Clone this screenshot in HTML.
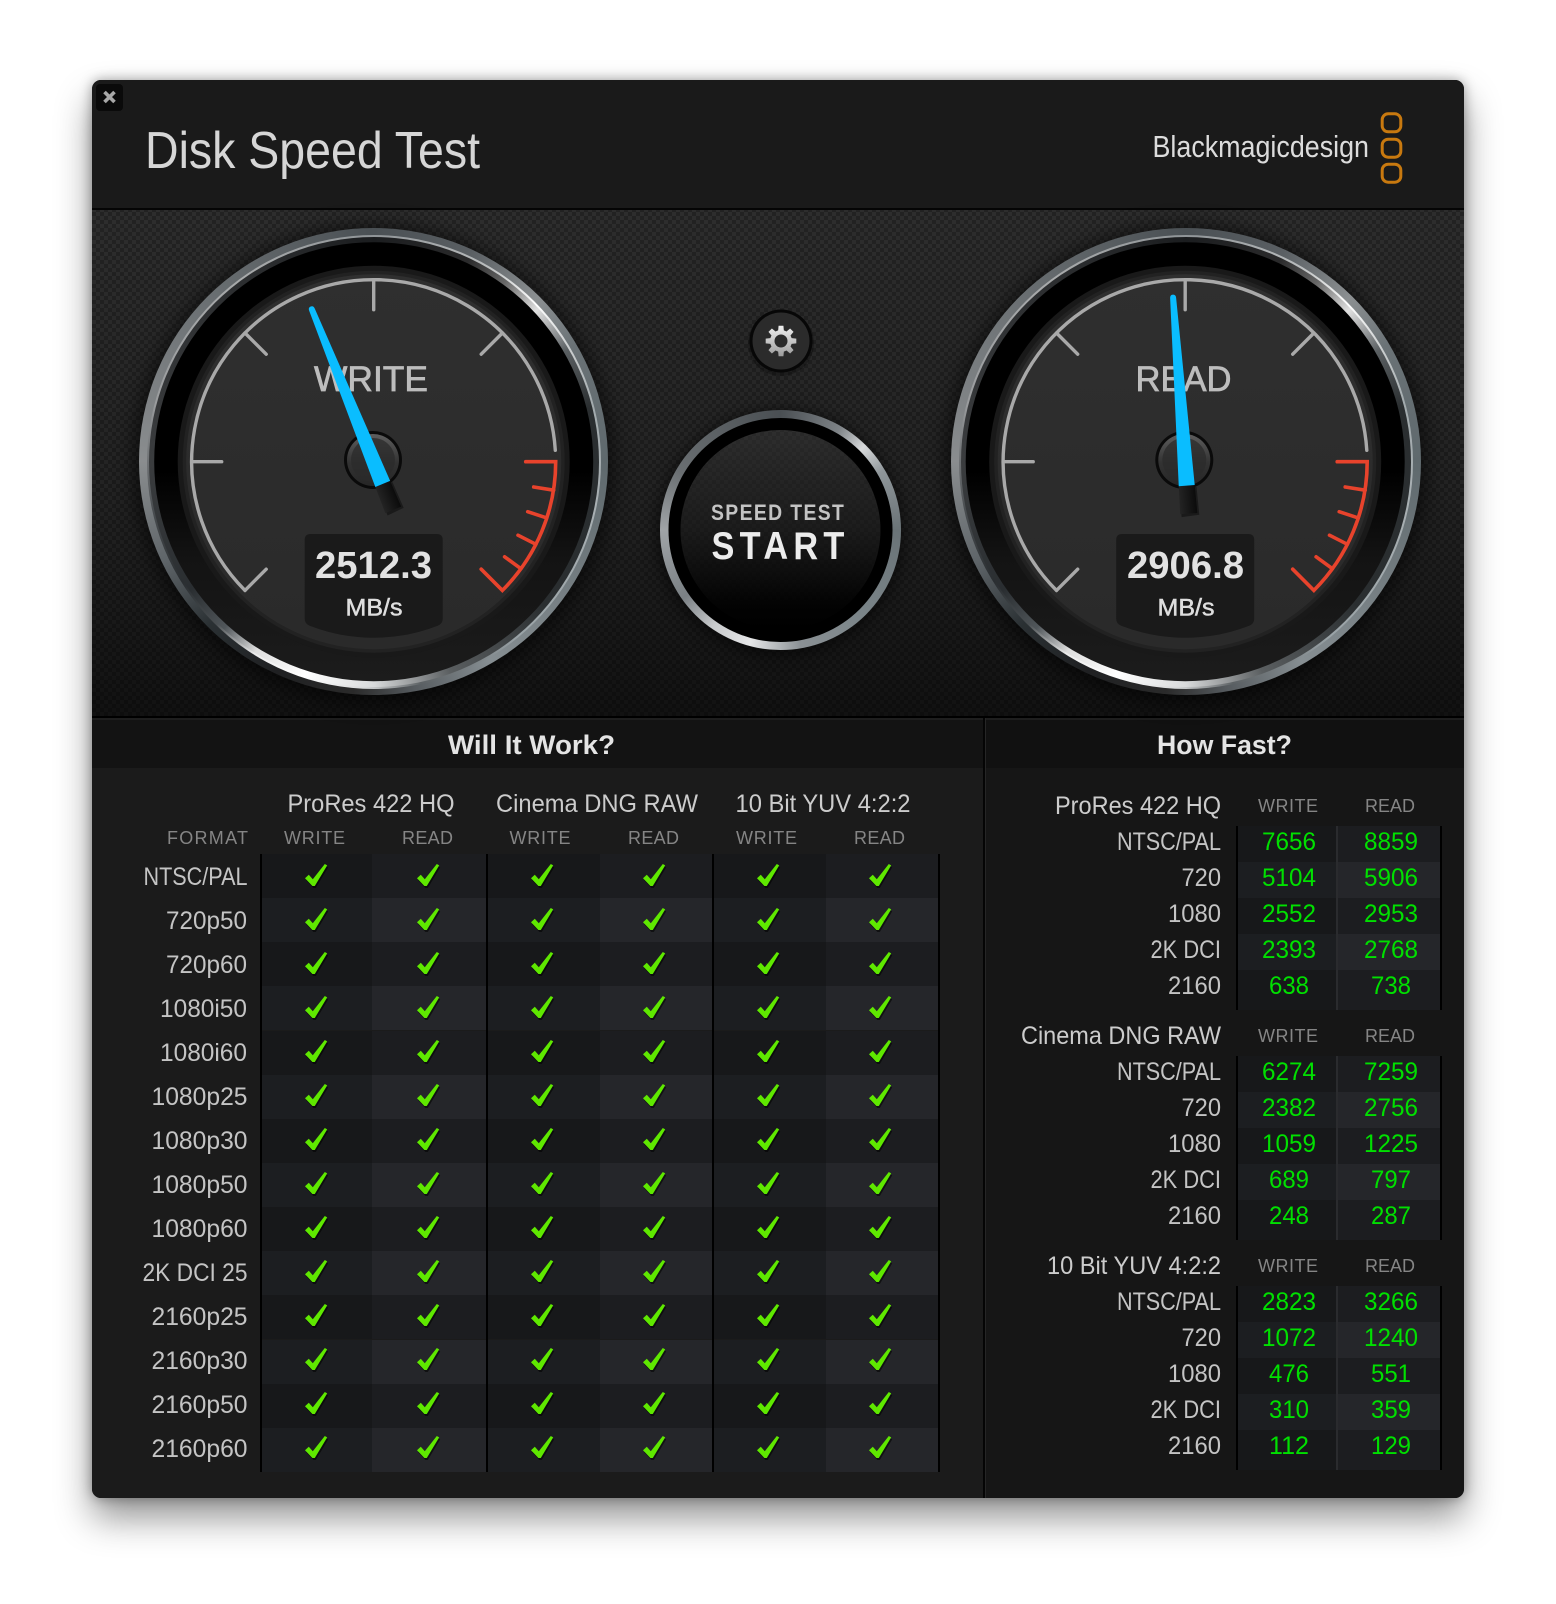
<!DOCTYPE html>
<html>
<head>
<meta charset="utf-8">
<title>Disk Speed Test</title>
<style>
html,body{margin:0;padding:0;background:#fff;width:1556px;height:1604px;overflow:hidden}
#win{position:absolute;left:92px;top:80px;width:1372px;height:1418px;border-radius:9px;box-shadow:0 20px 36px rgba(0,0,0,.42),0 0 12px rgba(0,0,0,.35);background:#1a1a1a}
#clip{position:absolute;left:0;top:0;width:1556px;height:1604px;clip-path:inset(80px 92px 106px 92px round 9px)}
svg{position:absolute;left:0;top:0}
.d{position:absolute;border-radius:50%}
text{font-family:"Liberation Sans",Arial,sans-serif}
.l{fill:#c4c4c4;font-size:25px}
.g{fill:#cccccc;font-size:25px}
.h{fill:#858585;font-size:18px}
.n{fill:#00e000;font-size:25px}
.b{fill:#e4e4e4;font-size:27px;font-weight:700}
</style>
</head>
<body>
<div id="win"></div>
<div id="clip">
<svg width="1556" height="1604" viewBox="0 0 1556 1604">
  <defs>
    <pattern id="chk" width="8" height="8" patternUnits="userSpaceOnUse">
      <rect width="8" height="8" fill="#2e2e2e"/>
      <rect width="4" height="4" fill="#232323"/>
      <rect x="4" y="4" width="4" height="4" fill="#232323"/>
    </pattern>
    <linearGradient id="pshade" x1="0" y1="0" x2="0" y2="1">
      <stop offset="0" stop-color="#000" stop-opacity=".02"/>
      <stop offset=".55" stop-color="#000" stop-opacity=".25"/>
      <stop offset="1" stop-color="#000" stop-opacity=".62"/>
    </linearGradient>
  </defs>
  <rect x="92" y="80" width="1372" height="128" fill="#1a1a1a"/>
  <rect x="92" y="208" width="1372" height="2" fill="#050505"/>
  <rect x="92" y="210" width="1372" height="507" fill="url(#chk)"/>
  <rect x="92" y="210" width="1372" height="507" fill="url(#pshade)"/>
  <rect x="92" y="716" width="1372" height="2" fill="#000"/>
  <rect x="92" y="718" width="891" height="780" fill="#1b1b1b"/>
  <rect x="985" y="718" width="479" height="780" fill="#161616"/>
  <rect x="92" y="718" width="891" height="50" fill="#131313"/>
  <rect x="985" y="718" width="479" height="50" fill="#111"/>
  <rect x="92" y="718" width="891" height="2" fill="#1e1e1e"/>
  <rect x="985" y="718" width="479" height="2" fill="#1e1e1e"/>
  <rect x="983" y="718" width="2" height="780" fill="#050505"/>
  <rect x="985" y="718" width="1" height="780" fill="#262626"/>
</svg>

<!-- gauge bezels -->
<div class="d" style="left:139px;top:228px;width:469px;height:467px;box-shadow:0 2px 18px 6px rgba(0,0,0,.55);background:conic-gradient(#4a5054 0deg,#5a5f63 25deg,#8b8f91 45deg,#6a7276 60deg,#5f696d 90deg,#868e92 150deg,#555a5e 170deg,#2a2a2a 185deg,#1f2022 205deg,#2a3033 225deg,#60666a 245deg,#8a8d8f 270deg,#6a6f72 315deg,#4a5054 360deg)"></div>
<div class="d" style="left:147px;top:235px;width:454px;height:454px;background:conic-gradient(#8f9497 0deg,#b9bcbd 30deg,#fff 46deg,#d0d3d4 58deg,#a2aaad 75deg,#a9b0b3 100deg,#9aa3a7 140deg,#5d6265 168deg,#d6d8d9 182deg,#fff 198deg,#ececec 212deg,#4a4f52 224deg,#2a2e31 238deg,#4a4e51 258deg,#9a9c9e 285deg,#a8aaab 325deg,#8f9497 360deg)"></div>
<div class="d" style="left:149px;top:237px;width:450px;height:450px;background:conic-gradient(#1b1d1f 0deg,#2a2a2b 25deg,#666 36deg,#e0e0e0 47deg,#5a5f62 60deg,#2a2e30 76deg,#2a2e30 130deg,#5a5e60 160deg,#d8dadb 180deg,#fff 198deg,#dedede 212deg,#50565a 222deg,#2a2e31 235deg,#3a3c3e 270deg,#2a2c2e 330deg,#1b1d1f 360deg)"></div>

<div class="d" style="left:951px;top:228px;width:470px;height:467px;box-shadow:0 2px 18px 6px rgba(0,0,0,.55);background:conic-gradient(#4a5054 0deg,#5a5f63 25deg,#8b8f91 45deg,#6a7276 60deg,#5f696d 90deg,#868e92 150deg,#555a5e 170deg,#2a2a2a 185deg,#1f2022 205deg,#2a3033 225deg,#60666a 245deg,#8a8d8f 270deg,#6a6f72 315deg,#4a5054 360deg)"></div>
<div class="d" style="left:959px;top:235px;width:454px;height:454px;background:conic-gradient(#8f9497 0deg,#b9bcbd 30deg,#fff 46deg,#d0d3d4 58deg,#a2aaad 75deg,#a9b0b3 100deg,#9aa3a7 140deg,#5d6265 168deg,#d6d8d9 182deg,#fff 198deg,#ececec 212deg,#4a4f52 224deg,#2a2e31 238deg,#4a4e51 258deg,#9a9c9e 285deg,#a8aaab 325deg,#8f9497 360deg)"></div>
<div class="d" style="left:961px;top:237px;width:450px;height:450px;background:conic-gradient(#1b1d1f 0deg,#2a2a2b 25deg,#666 36deg,#e0e0e0 47deg,#5a5f62 60deg,#2a2e30 76deg,#2a2e30 130deg,#5a5e60 160deg,#d8dadb 180deg,#fff 198deg,#dedede 212deg,#50565a 222deg,#2a2e31 235deg,#3a3c3e 270deg,#2a2c2e 330deg,#1b1d1f 360deg)"></div>

<!-- start bezel -->
<div class="d" style="left:660px;top:410px;width:241px;height:240px;box-shadow:0 2px 14px 4px rgba(0,0,0,.5);background:conic-gradient(#4a4f53 0deg,#7d8286 30deg,#d8dadb 45deg,#8f969a 60deg,#6a7377 90deg,#7a8488 135deg,#8a9094 170deg,#e6e7e8 195deg,#c8cacc 215deg,#7a8084 235deg,#a0a4a7 270deg,#6a6f72 300deg,#4a4f53 360deg)"></div>

<svg width="1556" height="1604" viewBox="0 0 1556 1604">
  <defs>
    <linearGradient id="band" x1="0" y1="0" x2="0" y2="1">
      <stop offset="0" stop-color="#000"/>
      <stop offset=".52" stop-color="#000"/>
      <stop offset=".72" stop-color="#131313"/>
      <stop offset="1" stop-color="#1c1c1c"/>
    </linearGradient>
    <linearGradient id="face" x1="0" y1="0" x2="0" y2="1">
      <stop offset="0" stop-color="#2f2f2f"/>
      <stop offset="1" stop-color="#2a2a2a"/>
    </linearGradient>
    <linearGradient id="hubg" x1="0" y1="0" x2="0" y2="1">
      <stop offset="0" stop-color="#5e5e5e"/>
      <stop offset=".55" stop-color="#333"/>
      <stop offset="1" stop-color="#262626"/>
    </linearGradient>
    <linearGradient id="startg" x1="0" y1="0" x2="0" y2="1">
      <stop offset="0" stop-color="#2e2e2e"/>
      <stop offset=".5" stop-color="#1c1c1c"/>
      <stop offset=".88" stop-color="#030303"/>
      <stop offset="1" stop-color="#000"/>
    </linearGradient>
    <linearGradient id="gearg" x1="0" y1="0" x2="0" y2="1">
      <stop offset="0" stop-color="#f0f0f0"/>
      <stop offset="1" stop-color="#9c9c9c"/>
    </linearGradient>
    <linearGradient id="stub" x1="0" y1="0" x2="1" y2="0">
      <stop offset="0" stop-color="#242424"/>
      <stop offset="1" stop-color="#0b0b0b"/>
    </linearGradient>

    <g id="dial">
      <circle r="219.5" fill="url(#band)"/>
      <circle r="196" fill="#191919"/>
      <circle r="191" fill="#222"/>
      <circle r="187.5" fill="url(#face)"/>
      <g fill="none" stroke="#a9a9a9" stroke-width="3.4" stroke-linecap="round">
        <path d="M-128.7 128.7A182 182 0 1 1 181.6 -11.4"/>
        <path d="M-128.7 128.7L-107.5 107.5"/>
        <path d="M-182 0H-152"/>
        <path d="M-128.7 -128.7L-107.5 -107.5"/>
        <path d="M0 -182V-152"/>
        <path d="M128.7 -128.7L107.5 -107.5"/>
      </g>
      <g fill="none" stroke="#e8432c" stroke-width="3.6" stroke-linecap="round" stroke-linejoin="miter">
        <path d="M152 0H182A182 182 0 0 1 128.7 128.7L107.5 107.5"/>
        <path d="M180 28.5L160 25.3"/>
        <path d="M173 56.2L154 50"/>
        <path d="M162.2 82.6L144.3 73.5"/>
        <path d="M147.2 107L130.9 95.1"/>
      </g>
      <path d="M-63 72.3H63Q69 72.3 69 78.3V157Q69 162 64 164A176 176 0 0 1 -64 164Q-69 162 -69 157V78.3Q-69 72.3 -63 72.3Z" fill="#1a1a1a"/>
    </g>
    <g id="hub">
      <circle r="29" fill="#0a0a0a"/>
      <circle r="26" fill="url(#hubg)"/>
      <circle r="22" fill="#2b2b2b" opacity=".75"/>
    </g>
    <g id="needle">
      <path d="M-8.4 25L-8.9 53L8.9 52L8.2 24Z" fill="#000" opacity=".4" transform="translate(1.5 2)"/>
      <path d="M-8 24L-8.6 52L8.6 52L8 24Z" fill="url(#stub)"/>
      <path d="M-3 -164Q-3 -167.5 0 -167.5Q3 -167.5 3 -164L8 24L-8 24Z" fill="#0abdff"/>
    </g>
    <path id="ck" d="M-11 3.2L-7.2 -0.2L-3.2 4.2L8.8 -11L11.2 -9.6L-1.2 11L-3.6 11Z"/>
    <g id="cr">
      <g fill="#000" opacity=".55" transform="translate(1 2)">
        <use href="#ck" x="316"/><use href="#ck" x="428"/><use href="#ck" x="542"/><use href="#ck" x="654"/><use href="#ck" x="768"/><use href="#ck" x="880"/>
      </g>
      <g fill="#5fe800">
        <use href="#ck" x="316"/><use href="#ck" x="428"/><use href="#ck" x="542"/><use href="#ck" x="654"/><use href="#ck" x="768"/><use href="#ck" x="880"/>
      </g>
    </g>
    <g id="od">
      <rect x="262" width="110" height="44" fill="#17181a"/><rect x="372" width="114" height="44" fill="#1c1d20"/>
      <rect x="488" width="112" height="44" fill="#17181a"/><rect x="600" width="112" height="44" fill="#1c1d20"/>
      <rect x="714" width="112" height="44" fill="#17181a"/><rect x="826" width="112" height="44" fill="#1c1d20"/>
    </g>
    <g id="ev">
      <rect x="262" width="110" height="44" fill="#1c1e21"/><rect x="372" width="114" height="44" fill="#25262a"/>
      <rect x="488" width="112" height="44" fill="#1c1e21"/><rect x="600" width="112" height="44" fill="#25262a"/>
      <rect x="714" width="112" height="44" fill="#1c1e21"/><rect x="826" width="112" height="44" fill="#25262a"/>
    </g>
    <g id="tb">
      <rect x="1238" y="826" width="98" height="36" fill="#17181a"/><rect x="1338" y="826" width="103" height="36" fill="#1c1d20"/>
      <rect x="1238" y="862" width="98" height="36" fill="#1c1e21"/><rect x="1338" y="862" width="103" height="36" fill="#25262a"/>
      <rect x="1238" y="898" width="98" height="36" fill="#17181a"/><rect x="1338" y="898" width="103" height="36" fill="#1c1d20"/>
      <rect x="1238" y="934" width="98" height="36" fill="#1c1e21"/><rect x="1338" y="934" width="103" height="36" fill="#25262a"/>
      <rect x="1238" y="970" width="98" height="40" fill="#17181a"/><rect x="1338" y="970" width="103" height="40" fill="#1c1d20"/>
      <rect x="1236" y="826" width="2" height="184" fill="#000"/>
      <rect x="1336" y="826" width="2" height="184" fill="#2a2b2e"/>
      <rect x="1440" y="826" width="2" height="184" fill="#000"/>
    </g>
    <pattern id="chk2" width="8" height="8" patternUnits="userSpaceOnUse">
      <rect width="4" height="4" fill="#000"/><rect x="4" y="4" width="4" height="4" fill="#000"/>
    </pattern>
  </defs>

  <!-- header -->
  <rect x="96" y="84" width="27" height="27" rx="4" fill="#0a0a0a"/>
  <path d="M104.5 92L114.5 102M114.5 92L104.5 102" stroke="#a8a8a8" stroke-width="3.6" fill="none"/>
  <text x="145" y="168" font-size="52" fill="#d6d6d6" textLength="335" lengthAdjust="spacingAndGlyphs">Disk Speed Test</text>
  <text x="1152.5" y="157" font-size="31" fill="#dcdcdc" textLength="216.5" lengthAdjust="spacingAndGlyphs">Blackmagicdesign</text>
  <g fill="none" stroke="#c8790f" stroke-width="3">
    <rect x="1382.2" y="113.8" width="18.6" height="18" rx="6"/>
    <rect x="1382.2" y="139.2" width="18.6" height="18" rx="6"/>
    <rect x="1382.2" y="164.2" width="18.6" height="18" rx="6"/>
  </g>

  <!-- write gauge -->
  <use href="#dial" transform="translate(373.7 461.7)"/>
  <use href="#hub" transform="translate(373 460)"/>
  <text x="314" y="391" font-size="35" fill="#bdbdbd" stroke="#bdbdbd" stroke-width=".7" textLength="114" lengthAdjust="spacingAndGlyphs">WRITE</text>
  <use href="#needle" transform="translate(373.7 461.7) rotate(-22.1)"/>
  <text x="315" y="578" font-size="38" font-weight="700" fill="#e2e2e2" textLength="117" lengthAdjust="spacingAndGlyphs">2512.3</text>
  <text x="345.5" y="615.5" font-size="24" fill="#dedede" stroke="#dedede" stroke-width=".5" textLength="57" lengthAdjust="spacingAndGlyphs">MB/s</text>

  <!-- read gauge -->
  <use href="#dial" transform="translate(1185.2 461.7)"/>
  <use href="#hub" transform="translate(1184.3 460)"/>
  <text x="1135.5" y="391" font-size="35" fill="#bdbdbd" stroke="#bdbdbd" stroke-width=".7" textLength="96" lengthAdjust="spacingAndGlyphs">READ</text>
  <use href="#needle" transform="translate(1185 461.7) rotate(-4.15)"/>
  <text x="1127" y="578" font-size="38" font-weight="700" fill="#e2e2e2" textLength="117" lengthAdjust="spacingAndGlyphs">2906.8</text>
  <text x="1157.5" y="615.5" font-size="24" fill="#dedede" stroke="#dedede" stroke-width=".5" textLength="57" lengthAdjust="spacingAndGlyphs">MB/s</text>

  <!-- gear -->
  <circle cx="781" cy="343" r="33" fill="#000" opacity=".25"/>
  <circle cx="781" cy="341" r="31.5" fill="#070707"/>
  <circle cx="781" cy="341" r="28.5" fill="#2b2b2b"/>
  <path transform="translate(781 341)" fill="url(#gearg)" fill-rule="evenodd" d="M-2.85 -10.63L-2.42 -15.31L2.42 -15.31L2.85 -10.63L5.5 -9.53L9.11 -12.54L12.54 -9.11L9.53 -5.5L10.63 -2.85L15.31 -2.42L15.31 2.42L10.63 2.85L9.53 5.5L12.54 9.11L9.11 12.54L5.5 9.53L2.85 10.63L2.42 15.31L-2.42 15.31L-2.85 10.63L-5.5 9.53L-9.11 12.54L-12.54 9.11L-9.53 5.5L-10.63 2.85L-15.31 2.42L-15.31 -2.42L-10.63 -2.85L-9.53 -5.5L-12.54 -9.11L-9.11 -12.54L-5.5 -9.53ZM6.5 0A6.5 6.5 0 1 0 -6.5 0A6.5 6.5 0 1 0 6.5 0Z"/>

  <!-- start -->
  <circle cx="780.5" cy="530" r="112" fill="#000"/>
  <circle cx="780.5" cy="530" r="100" fill="url(#startg)"/>
  <circle cx="780.5" cy="530" r="100" fill="url(#chk2)" opacity=".1"/>
  <text transform="translate(711 520) scale(.88 1)" font-size="22" font-weight="700" fill="#c4c4c4" textLength="151" lengthAdjust="spacing">SPEED TEST</text>
  <text transform="translate(711.5 559) scale(.88 1)" font-size="39" font-weight="700" fill="#ececec" textLength="151" lengthAdjust="spacing">START</text>

  <!-- will it work -->
  <text x="448" y="754" class="b" textLength="167" lengthAdjust="spacingAndGlyphs">Will It Work?</text>
  <text x="287.5" y="812" class="g" textLength="167" lengthAdjust="spacingAndGlyphs">ProRes 422 HQ</text>
  <text x="496" y="812" class="g" textLength="202" lengthAdjust="spacingAndGlyphs">Cinema DNG RAW</text>
  <text x="735.5" y="812" class="g" textLength="175" lengthAdjust="spacingAndGlyphs">10 Bit YUV 4:2:2</text>
  <text x="167" y="844" class="h" textLength="81" lengthAdjust="spacing">FORMAT</text>
  <text x="284" y="844" class="h" textLength="61" lengthAdjust="spacing">WRITE</text>
  <text x="402" y="844" class="h" textLength="51" lengthAdjust="spacing">READ</text>
  <text x="509.5" y="844" class="h" textLength="61" lengthAdjust="spacing">WRITE</text>
  <text x="628" y="844" class="h" textLength="51" lengthAdjust="spacing">READ</text>
  <text x="736" y="844" class="h" textLength="61" lengthAdjust="spacing">WRITE</text>
  <text x="854" y="844" class="h" textLength="51" lengthAdjust="spacing">READ</text>

  <use href="#od" y="854"/><use href="#ev" y="898"/><use href="#od" y="942"/><use href="#ev" y="986"/>
  <use href="#od" y="1031"/><use href="#ev" y="1075"/><use href="#od" y="1119"/><use href="#ev" y="1163"/>
  <use href="#od" y="1207"/><use href="#ev" y="1251"/><use href="#od" y="1295"/><use href="#ev" y="1340"/>
  <use href="#od" y="1384"/><use href="#ev" y="1428"/>
  <rect x="260" y="854" width="2" height="618" fill="#000"/>
  <rect x="486" y="854" width="2" height="618" fill="#000"/>
  <rect x="712" y="854" width="2" height="618" fill="#000"/>
  <rect x="938" y="854" width="2" height="618" fill="#000"/>

  <text x="143.5" y="885" class="l" textLength="104" lengthAdjust="spacingAndGlyphs">NTSC/PAL</text>
  <text x="166" y="929" class="l" textLength="81" lengthAdjust="spacingAndGlyphs">720p50</text>
  <text x="166" y="973" class="l" textLength="81" lengthAdjust="spacingAndGlyphs">720p60</text>
  <text x="160" y="1017" class="l" textLength="87" lengthAdjust="spacingAndGlyphs">1080i50</text>
  <text x="160" y="1061" class="l" textLength="87" lengthAdjust="spacingAndGlyphs">1080i60</text>
  <text x="151.5" y="1105" class="l" textLength="96" lengthAdjust="spacingAndGlyphs">1080p25</text>
  <text x="151.5" y="1149" class="l" textLength="96" lengthAdjust="spacingAndGlyphs">1080p30</text>
  <text x="151.5" y="1193" class="l" textLength="96" lengthAdjust="spacingAndGlyphs">1080p50</text>
  <text x="151.5" y="1237" class="l" textLength="96" lengthAdjust="spacingAndGlyphs">1080p60</text>
  <text x="142.5" y="1281" class="l" textLength="105" lengthAdjust="spacingAndGlyphs">2K DCI 25</text>
  <text x="151.5" y="1325" class="l" textLength="96" lengthAdjust="spacingAndGlyphs">2160p25</text>
  <text x="151.5" y="1369" class="l" textLength="96" lengthAdjust="spacingAndGlyphs">2160p30</text>
  <text x="151.5" y="1413" class="l" textLength="96" lengthAdjust="spacingAndGlyphs">2160p50</text>
  <text x="151.5" y="1457" class="l" textLength="96" lengthAdjust="spacingAndGlyphs">2160p60</text>

  <use href="#cr" y="875"/><use href="#cr" y="919"/><use href="#cr" y="963"/><use href="#cr" y="1007"/>
  <use href="#cr" y="1051"/><use href="#cr" y="1095"/><use href="#cr" y="1139"/><use href="#cr" y="1183"/>
  <use href="#cr" y="1227"/><use href="#cr" y="1271"/><use href="#cr" y="1315"/><use href="#cr" y="1359"/>
  <use href="#cr" y="1403"/><use href="#cr" y="1447"/>

  <!-- how fast -->
  <text x="1157" y="754" class="b" textLength="135" lengthAdjust="spacingAndGlyphs">How Fast?</text>
  <use href="#tb"/><use href="#tb" y="230"/><use href="#tb" y="460"/>

  <text x="1055" y="814" class="g" textLength="166" lengthAdjust="spacingAndGlyphs">ProRes 422 HQ</text>
  <text x="1258" y="812" class="h" textLength="60" lengthAdjust="spacing">WRITE</text>
  <text x="1365" y="812" class="h" textLength="50" lengthAdjust="spacing">READ</text>
  <text x="1117" y="850" class="l" textLength="104" lengthAdjust="spacingAndGlyphs">NTSC/PAL</text>
  <text x="1181.5" y="886" class="l" textLength="39.5" lengthAdjust="spacingAndGlyphs">720</text>
  <text x="1168" y="922" class="l" textLength="53" lengthAdjust="spacingAndGlyphs">1080</text>
  <text x="1150.5" y="958" class="l" textLength="70.5" lengthAdjust="spacingAndGlyphs">2K DCI</text>
  <text x="1168" y="994" class="l" textLength="53" lengthAdjust="spacingAndGlyphs">2160</text>
  <text x="1262" y="850" class="n" textLength="54" lengthAdjust="spacingAndGlyphs">7656</text>
  <text x="1364" y="850" class="n" textLength="54" lengthAdjust="spacingAndGlyphs">8859</text>
  <text x="1262" y="886" class="n" textLength="54" lengthAdjust="spacingAndGlyphs">5104</text>
  <text x="1364" y="886" class="n" textLength="54" lengthAdjust="spacingAndGlyphs">5906</text>
  <text x="1262" y="922" class="n" textLength="54" lengthAdjust="spacingAndGlyphs">2552</text>
  <text x="1364" y="922" class="n" textLength="54" lengthAdjust="spacingAndGlyphs">2953</text>
  <text x="1262" y="958" class="n" textLength="54" lengthAdjust="spacingAndGlyphs">2393</text>
  <text x="1364" y="958" class="n" textLength="54" lengthAdjust="spacingAndGlyphs">2768</text>
  <text x="1269" y="994" class="n" textLength="40" lengthAdjust="spacingAndGlyphs">638</text>
  <text x="1371" y="994" class="n" textLength="40" lengthAdjust="spacingAndGlyphs">738</text>

  <text x="1021" y="1044" class="g" textLength="200" lengthAdjust="spacingAndGlyphs">Cinema DNG RAW</text>
  <text x="1258" y="1042" class="h" textLength="60" lengthAdjust="spacing">WRITE</text>
  <text x="1365" y="1042" class="h" textLength="50" lengthAdjust="spacing">READ</text>
  <text x="1117" y="1080" class="l" textLength="104" lengthAdjust="spacingAndGlyphs">NTSC/PAL</text>
  <text x="1181.5" y="1116" class="l" textLength="39.5" lengthAdjust="spacingAndGlyphs">720</text>
  <text x="1168" y="1152" class="l" textLength="53" lengthAdjust="spacingAndGlyphs">1080</text>
  <text x="1150.5" y="1188" class="l" textLength="70.5" lengthAdjust="spacingAndGlyphs">2K DCI</text>
  <text x="1168" y="1224" class="l" textLength="53" lengthAdjust="spacingAndGlyphs">2160</text>
  <text x="1262" y="1080" class="n" textLength="54" lengthAdjust="spacingAndGlyphs">6274</text>
  <text x="1364" y="1080" class="n" textLength="54" lengthAdjust="spacingAndGlyphs">7259</text>
  <text x="1262" y="1116" class="n" textLength="54" lengthAdjust="spacingAndGlyphs">2382</text>
  <text x="1364" y="1116" class="n" textLength="54" lengthAdjust="spacingAndGlyphs">2756</text>
  <text x="1262" y="1152" class="n" textLength="54" lengthAdjust="spacingAndGlyphs">1059</text>
  <text x="1364" y="1152" class="n" textLength="54" lengthAdjust="spacingAndGlyphs">1225</text>
  <text x="1269" y="1188" class="n" textLength="40" lengthAdjust="spacingAndGlyphs">689</text>
  <text x="1371" y="1188" class="n" textLength="40" lengthAdjust="spacingAndGlyphs">797</text>
  <text x="1269" y="1224" class="n" textLength="40" lengthAdjust="spacingAndGlyphs">248</text>
  <text x="1371" y="1224" class="n" textLength="40" lengthAdjust="spacingAndGlyphs">287</text>

  <text x="1047" y="1274" class="g" textLength="174" lengthAdjust="spacingAndGlyphs">10 Bit YUV 4:2:2</text>
  <text x="1258" y="1272" class="h" textLength="60" lengthAdjust="spacing">WRITE</text>
  <text x="1365" y="1272" class="h" textLength="50" lengthAdjust="spacing">READ</text>
  <text x="1117" y="1310" class="l" textLength="104" lengthAdjust="spacingAndGlyphs">NTSC/PAL</text>
  <text x="1181.5" y="1346" class="l" textLength="39.5" lengthAdjust="spacingAndGlyphs">720</text>
  <text x="1168" y="1382" class="l" textLength="53" lengthAdjust="spacingAndGlyphs">1080</text>
  <text x="1150.5" y="1418" class="l" textLength="70.5" lengthAdjust="spacingAndGlyphs">2K DCI</text>
  <text x="1168" y="1454" class="l" textLength="53" lengthAdjust="spacingAndGlyphs">2160</text>
  <text x="1262" y="1310" class="n" textLength="54" lengthAdjust="spacingAndGlyphs">2823</text>
  <text x="1364" y="1310" class="n" textLength="54" lengthAdjust="spacingAndGlyphs">3266</text>
  <text x="1262" y="1346" class="n" textLength="54" lengthAdjust="spacingAndGlyphs">1072</text>
  <text x="1364" y="1346" class="n" textLength="54" lengthAdjust="spacingAndGlyphs">1240</text>
  <text x="1269" y="1382" class="n" textLength="40" lengthAdjust="spacingAndGlyphs">476</text>
  <text x="1371" y="1382" class="n" textLength="40" lengthAdjust="spacingAndGlyphs">551</text>
  <text x="1269" y="1418" class="n" textLength="40" lengthAdjust="spacingAndGlyphs">310</text>
  <text x="1371" y="1418" class="n" textLength="40" lengthAdjust="spacingAndGlyphs">359</text>
  <text x="1269" y="1454" class="n" textLength="40" lengthAdjust="spacingAndGlyphs">112</text>
  <text x="1371" y="1454" class="n" textLength="40" lengthAdjust="spacingAndGlyphs">129</text>
</svg>
</div>
</body>
</html>
